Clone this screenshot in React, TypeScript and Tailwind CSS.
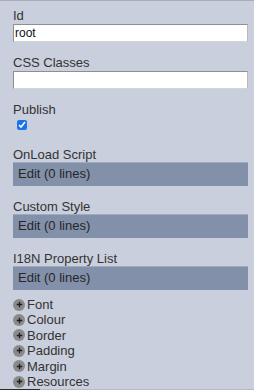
import React from 'react';

const sections = ['Font', 'Colour', 'Border', 'Padding', 'Margin', 'Resources'];

function Label({ text, className = '' }: { text: string; className?: string }) {
  return <div className={`h-[15px] leading-[15px] ${className}`}>{text}</div>;
}

function TextInput({ value }: { value: string }) {
  return (
    <input
      readOnly
      value={value}
      className="mt-[1px] h-[18px] w-[235px] bg-white border border-t-[#8f8f8f] border-l-[#8f8f8f] border-r-[#b9b9b9] border-b-[#d4d4d4] px-[1px] text-[12px] leading-[16px] text-[#111] outline-none"
    />
  );
}

function EditBar() {
  return (
    <div className="h-[24px] w-[235px] bg-[#8290aa] border-t border-[#a1abbf] pl-[5px] leading-[22px] text-[#262626]">
      Edit (0 lines)
    </div>
  );
}

function PlusIcon() {
  return (
    <span className="mr-[2px] flex h-[12px] w-[12px] items-center justify-center rounded-full bg-[#8a8a8a]">
      <svg width="7" height="7" viewBox="0 0 7 7">
        <path d="M3.5 0.8v5.4M0.8 3.5h5.4" stroke="#1c1c1c" strokeWidth="1.3" />
      </svg>
    </span>
  );
}

export default function App() {
  return (
    <div className="flex h-[390px] w-[254px] flex-col overflow-hidden border-t border-t-[#a7aebb] bg-[#c9cfdc] pt-[7px] font-['Liberation_Sans',Arial,sans-serif] text-[13px] text-[#333]">
      <div className="flex flex-col pl-[13px]">
        <Label text="Id" />
        <TextInput value="root" />

        <Label text="CSS Classes" className="mt-[13px]" />
        <TextInput value="" />

        <Label text="Publish" className="mt-[13px]" />
        <input
          type="checkbox"
          defaultChecked
          className="ml-[4px] mt-[3px] h-[10px] w-[10px] accent-[#1a73e8]"
        />

        <Label text="OnLoad Script" className="mt-[17px]" />
        <EditBar />

        <Label text="Custom Style" className="mt-[13px]" />
        <EditBar />

        <Label text="I18N Property List" className="mt-[13px]" />
        <EditBar />

        <ul className="mt-[7px]">
          {sections.map((s) => (
            <li key={s} className="flex h-[15.4px] items-center leading-[15.4px]">
              <PlusIcon />
              <span>{s}</span>
            </li>
          ))}
        </ul>
      </div>
      <div className="mt-auto flex h-[1px] shrink-0">
        <div className="w-[40px] bg-[#2a2a2a]" />
        <div className="flex-1 bg-[#b5bbc6]" />
      </div>
    </div>
  );
}
